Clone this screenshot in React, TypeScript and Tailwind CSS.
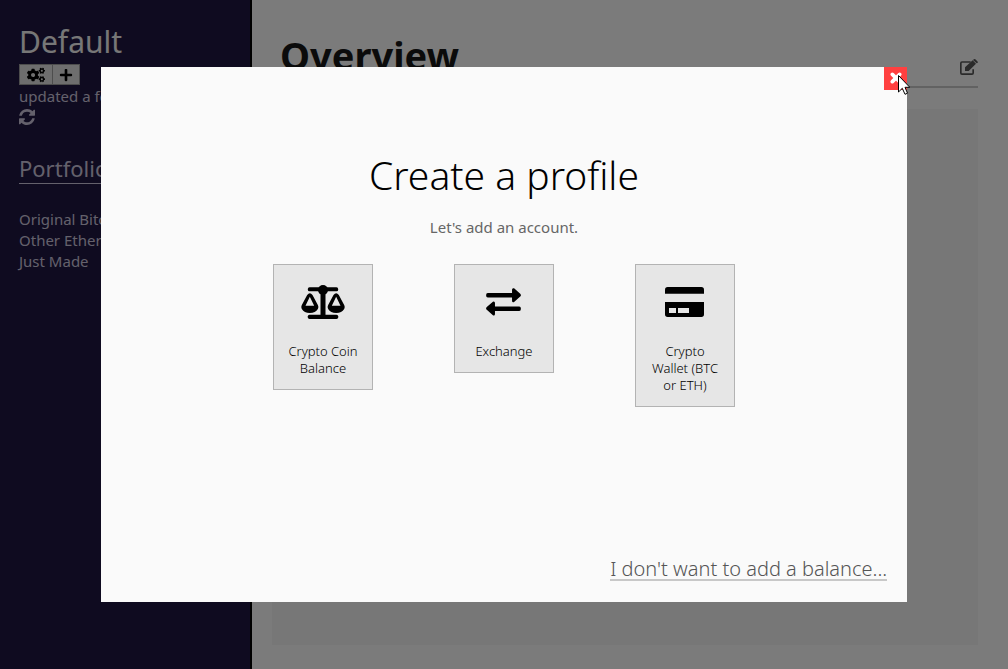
import type { ReactNode } from 'react';
import { FaCogs, FaPlus } from 'react-icons/fa';

function RefreshIcon() {
  return (
    <svg viewBox="0 0 1536 1536" className="size-4 fill-current" aria-hidden="true">
      <path d="M1511 928q0 5-1 7-64 268-268 434.500t-478 166.500q-146 0-282.500-55t-243.500-157l-129 129q-19 19-45 19t-45-19-19-45v-448q0-26 19-45t45-19h448q26 0 45 19t19 45-19 45l-137 137q71 66 161 102t187 36q134 0 250-65t186-179q11-17 53-117 8-23 30-23h192q13 0 22.500 9.500t9.500 22.500zm25-800v448q0 26-19 45t-45 19h-448q-26 0-45-19t-19-45 19-45l138-138q-148-137-349-137-134 0-250 65t-186 179q-11 17-53 117-8 23-30 23h-199q-13 0-22.500-9.500t-9.500-22.500v-7q65-268 270-434.500t480-166.500q146 0 284 55.500t245 156.500l130-129q19-19 45-19t45 19 19 45z" />
    </svg>
  );
}

function EditIcon() {
  return (
    <svg viewBox="0 0 54 48" className="h-4 w-[18px]" aria-hidden="true">
      <path d="M32 9H6Q2.500 9 2.500 12.500V42Q2.500 45.500 6 45.500H36Q39.500 45.500 39.500 42V31" fill="none" stroke="currentColor" strokeWidth="5" />
      <path d="M15 25L38 4L48 14L26 36H15ZM40 2Q43-1 46 1L52 7Q55 10 52 12L50 13L39 3Z" fill="currentColor" />
    </svg>
  );
}

function ScaleIcon() {
  return (
    <svg viewBox="0 0 131 102" className="h-[34px] w-11" aria-hidden="true">
      <rect x="20" y="7" width="91" height="12" rx="5" />
      <circle cx="65.500" cy="15" r="15" />
      <rect x="58" y="12" width="15" height="82" />
      <rect x="20" y="89" width="91" height="13" rx="5" />
      <path fillRule="evenodd" d="M18 30Q26 20 34 30L50 60Q53 66 50 72Q43 84 26 84Q9 84 2 72Q-1 66 2 60ZM26 35L13 62H39Z" />
      <path fillRule="evenodd" d="M97 30Q105 20 113 30L129 60Q132 66 129 72Q122 84 105 84Q88 84 81 72Q78 66 81 60ZM105 35L92 62H118Z" />
    </svg>
  );
}

function ExchangeIcon() {
  return (
    <svg viewBox="0 0 102 82" className="h-7 w-[35px]" aria-hidden="true">
      <path d="M5 15H76V5Q76-1 82 1L100 17Q104 21 100 25L82 41Q76 43 76 37V28H5Q0 28 0 21.500Q0 15 5 15Z" />
      <path d="M97 54H26V44Q26 38 20 40L2 56Q-2 60 2 64L20 80Q26 82 26 76V67H97Q102 67 102 60.500Q102 54 97 54Z" />
    </svg>
  );
}

function CardIcon() {
  return (
    <svg viewBox="0 0 117 90" className="h-[30px] w-[39px]" aria-hidden="true">
      <path d="M8 0H109Q117 0 117 8V20H0V8Q0 0 8 0Z" />
      <path fillRule="evenodd" d="M0 45H117V82Q117 90 109 90H8Q0 90 0 82ZM12 63V78H33V63ZM39 63V78H72V63Z" />
    </svg>
  );
}

function AccountOption({ icon, label }: { icon: ReactNode; label: string }) {
  return (
    <button
      type="button"
      className="flex w-[100px] flex-col items-center border border-[#b3b3b3] bg-[#e6e6e6] px-3 pt-4 pb-3 text-[13px] leading-[17px] font-light text-black"
    >
      <span className="mb-5 flex h-[42px] items-center">{icon}</span>
      {label}
    </button>
  );
}

function Sidebar() {
  return (
    <aside className="w-[252px] shrink-0 border-r-2 border-black bg-[#1e1640] pt-[22px] pl-[19px] text-[15px] text-[#c8c2d8]">
      <h1 className="mb-0.5 text-[30px] leading-10 text-[#eeeeee]">Default</h1>
      <div className="flex text-black">
        <button type="button" aria-label="Settings" className="flex h-[21px] w-[34px] items-center justify-center border border-[#9a9a9a] bg-[#dddddd]">
          <FaCogs className="size-[18px]" />
        </button>
        <button type="button" aria-label="Add profile" className="-ml-px flex h-[21px] w-7 items-center justify-center border border-[#9a9a9a] bg-[#dddddd]">
          <FaPlus className="size-3.5" />
        </button>
      </div>
      <p className="mt-px leading-[21px] whitespace-nowrap">updated a few seconds ago</p>
      <button type="button" aria-label="Refresh" className="mt-0.5 block">
        <RefreshIcon />
      </button>
      <h2 className="mt-7 mr-5 border-b border-[#c8c2d8] text-[22px] leading-[30px]">Portfolios</h2>
      <ul className="mt-[25px] leading-[21px] whitespace-nowrap">
        <li>Original Bitcoin</li>
        <li>Other Ethereum</li>
        <li>Just Made</li>
      </ul>
    </aside>
  );
}

function Overview() {
  return (
    <main className="flex grow flex-col bg-[#f6f6f6] pt-8 pr-[30px] pb-6 pl-5">
      <header className="flex h-14 items-start justify-between border-b-2 border-[#c4c4c4] pl-2">
        <h2 className="text-[38px] leading-[46px] font-bold text-[#161616]">Overview</h2>
        <button type="button" aria-label="Edit" className="mt-[27px] text-[#555555]">
          <EditIcon />
        </button>
      </header>
      <section className="mt-[21px] grow bg-[#eeeeee]" />
    </main>
  );
}

export default function App() {
  return (
    <div className="flex min-h-screen font-['Noto_Sans','Open_Sans',sans-serif]">
      <Sidebar />
      <Overview />
      <div className="fixed inset-0 flex items-center justify-center bg-black/50">
        <div role="dialog" aria-labelledby="dialog-title" className="relative flex h-4/5 w-4/5 flex-col items-center bg-[#fafafa]">
          <button type="button" aria-label="Close" className="absolute top-0 right-0 flex size-[23px] items-center justify-center bg-[#ff4040]">
            <svg viewBox="0 0 36 36" className="size-3" aria-hidden="true">
              <path d="M7 7L29 29M29 7L7 29" stroke="white" strokeWidth="11" strokeLinecap="round" />
            </svg>
          </button>
          <svg viewBox="0 0 12 20" className="pointer-events-none absolute top-2 -right-[3px] h-5 w-3" aria-hidden="true">
            <path d="M.5.500V17L4.300 13.300L7 19.300L9.500 18.200L7 12.300H11.800Z" fill="white" stroke="black" />
          </svg>
          <h2 id="dialog-title" className="mt-[82px] text-[39px] leading-[52px] font-light text-black">Create a profile</h2>
          <p className="mt-3.5 text-[15px] leading-6 text-[#666666]">Let's add an account.</p>
          <div className="mt-[25px] flex items-start justify-center gap-[81px]">
            <AccountOption icon={<ScaleIcon />} label="Crypto Coin Balance" />
            <AccountOption icon={<ExchangeIcon />} label="Exchange" />
            <AccountOption icon={<CardIcon />} label="Crypto Wallet (BTC or ETH)" />
          </div>
          <a href="#skip" className="mt-auto mr-5 mb-[21px] self-end border-b-2 border-[#c8c8c8] text-xl leading-5 font-light text-[#555555]">
            I don't want to add a balance...
          </a>
        </div>
      </div>
    </div>
  );
}
